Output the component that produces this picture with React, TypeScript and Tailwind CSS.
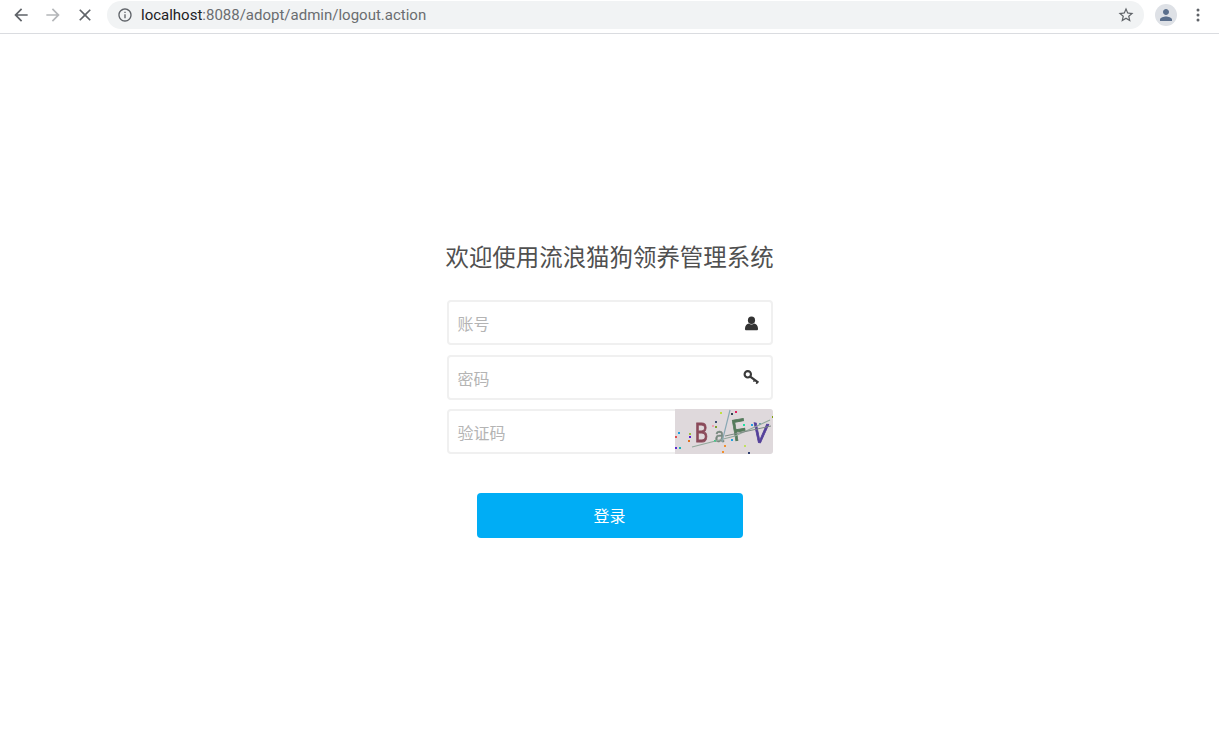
import React from "react";

const cjk = "font-['Roboto','Noto_Sans_CJK_SC',sans-serif]";

function Field({ label, children }: { label: string; children?: React.ReactNode }) {
  return (
    <div className="flex h-[45px] w-[326px] items-center justify-between rounded-[4px] border-2 border-[#f0f0f0] bg-white">
      <span className="pt-[4px] pl-[9px] text-[16px] text-[#b4b4b4]">{label}</span>
      {children}
    </div>
  );
}

function Captcha() {
  const dots: [number, number, string][] = [
    [45, 3, "#c0e040"], [60, 2, "#e02060"], [56, 4, "#304050"], [40, 12, "#405070"], [37, 16, "#f0a0b0"],
    [40, 17, "#80a030"], [14, 24, "#a0c040"], [14, 27, "#5a20d0"], [22, 22, "#e050c0"], [3, 23, "#20a0e0"],
    [13, 31, "#e07020"], [0, 27, "#e05050"], [0, 38, "#5a2bd0"], [4, 38, "#20b0b0"], [39, 31, "#10e080"],
    [56, 30, "#20a0e0"], [68, 15, "#20e0a0"], [76, 15, "#20a0e0"], [97, 7, "#80a010"], [49, 36, "#f09030"],
    [47, 42, "#f09030"], [73, 43, "#304070"], [69, 36, "#c0e060"], [84, 14, "#60a0b0"],
  ];
  return (
    <svg width="98" height="45" viewBox="0 0 98 45" className="-my-[2px] -mr-[2px] shrink-0 rounded-r-[3px]">
      <rect width="98" height="45" fill="#dfd9dc" />
      {dots.map(([x, y, c], i) => (
        <rect key={i} x={x} y={y} width="2" height="2" fill={c} />
      ))}
      <g style={{ filter: "blur(0.4px)" }}>
        <text x="20" y="33" fontFamily="Liberation Sans" fontSize="28" textLength="13" lengthAdjust="spacingAndGlyphs" fill="#8a4a5a" stroke="#8a4a5a" strokeWidth="0.9">B</text>
        <text x="40" y="33" fontFamily="Liberation Sans" fontSize="20" textLength="9" lengthAdjust="spacingAndGlyphs" fill="#78887e" stroke="#78887e" strokeWidth="0.6">a</text>
        <text x="57" y="31" fontFamily="Liberation Sans" fontSize="30" textLength="14" lengthAdjust="spacingAndGlyphs" fill="#557a5c" stroke="#557a5c" strokeWidth="0.9" transform="rotate(-10 64 20)">F</text>
        <text x="78" y="34" fontFamily="Liberation Sans" fontSize="28" textLength="15" lengthAdjust="spacingAndGlyphs" fill="#54409a" stroke="#54409a" strokeWidth="0.9" transform="rotate(6 86 24)">V</text>
        <path d="M17 38 L60 27 L95 11" stroke="#93a89c" strokeWidth="1.2" fill="none" />
        <path d="M50 27 L96 17" stroke="#7d8a84" strokeWidth="1" fill="none" />
        <path d="M47 33 L55 1" stroke="#88a8b4" strokeWidth="1.2" fill="none" />
      </g>
    </svg>
  );
}

export default function App() {
  return (
    <div className={`min-h-[739px] bg-white ${cjk}`}>
      <header className="flex h-[34px] items-start border-b border-[#dadce0] bg-white pt-px">
        <div className="flex h-[28px] w-[107px] items-center pl-[11px]">
          <svg width="20" height="20" viewBox="0 0 24 24" fill="#5f6368" className="mr-[12px]"><path d="M20 11H7.83l5.59-5.59L12 4l-8 8 8 8 1.41-1.41L7.83 13H20z" /></svg>
          <svg width="20" height="20" viewBox="0 0 24 24" fill="#b4b6b9" className="mr-[12px]"><path d="M12 4l-1.41 1.41L16.17 11H4v2h12.17l-5.58 5.59L12 20l8-8z" /></svg>
          <svg width="20" height="20" viewBox="0 0 24 24" fill="#5f6368"><path d="M19 6.41L17.59 5 12 10.59 6.41 5 5 6.41 10.59 12 5 17.59 6.41 19 12 13.41 17.59 19 19 17.59 13.41 12z" /></svg>
        </div>
        <div className="flex h-[28px] w-[1037px] items-center rounded-full bg-[#f1f3f4] pl-[10px] pr-[9px]">
          <svg width="16" height="16" viewBox="0 0 24 24" fill="#5f6368" className="mr-[8px]"><path d="M11 7h2v2h-2zm0 4h2v6h-2zm1-9C6.48 2 2 6.48 2 12s4.48 10 10 10 10-4.48 10-10S17.52 2 12 2zm0 18c-4.41 0-8-3.59-8-8s3.59-8 8-8 8 3.59 8 8-3.59 8-8 8z" /></svg>
          <span className="text-[15px] text-[#6a6d70]"><span className="text-[#202124]">localhost</span>:8088/adopt/admin/logout.action</span>
          <svg width="18" height="18" viewBox="0 0 24 24" fill="#5f6368" className="ml-auto"><path d="M22 9.24l-7.19-.62L12 2 9.19 8.63 2 9.24l5.46 4.73L5.82 21 12 17.27 18.18 21l-1.63-7.03L22 9.24zM12 15.4l-3.76 2.27 1-4.28-3.32-2.88 4.38-.38L12 6.1l1.71 4.04 4.38.38-3.32 2.88 1 4.28L12 15.4z" /></svg>
        </div>
        <div className="mt-[3px] ml-[11px] flex h-[22px] w-[22px] items-center justify-center rounded-full bg-[#dee1e6]">
          <svg width="18" height="18" viewBox="0 0 24 24" fill="#5b6f8c"><path d="M12 12c2.21 0 4-1.79 4-4s-1.79-4-4-4-4 1.79-4 4 1.79 4 4 4zm0 2c-2.67 0-8 1.34-8 4v2h16v-2c0-2.66-5.33-4-8-4z" /></svg>
        </div>
        <div className="mt-[4px] ml-[11px] flex h-[20px] w-[20px] items-center justify-center">
          <svg width="20" height="20" viewBox="0 0 24 24" fill="#5f6368"><circle cx="12" cy="6" r="1.8" /><circle cx="12" cy="12" r="1.8" /><circle cx="12" cy="18" r="1.8" /></svg>
        </div>
      </header>

      <main className="flex flex-col items-center pt-[208px]">
        <h1 className="mb-[26px] text-center text-[23.45px] leading-[32px] font-normal whitespace-nowrap text-[#505050]">欢迎使用流浪猫狗领养管理系统</h1>
        <div className="flex flex-col gap-[10px]">
          <Field label="账号">
            <svg width="15" height="15" viewBox="0 0 16 16" fill="#333333" className="mt-[2px] mr-[12px]">
              <ellipse cx="8" cy="4.6" rx="3.8" ry="4" />
              <path d="M1 13.8c0-3.4 2.1-5.4 4.2-5.7 1.5 1.2 4.1 1.2 5.6 0 2.1.3 4.2 2.3 4.2 5.7 0 1-.7 1.5-1.4 1.5H2.4c-.7 0-1.4-.5-1.4-1.5z" />
            </svg>
          </Field>
          <Field label="密码">
            <svg width="17" height="17" viewBox="0 0 16 16" fill="none" stroke="#3a3a3a" className="mr-[11px]">
              <circle cx="4.5" cy="5" r="3" strokeWidth="2" />
              <path d="M6.8 7.2 L14.5 12.8" strokeWidth="2.2" />
              <path d="M11 10 L10 12 M13.4 12 L12.6 14" strokeWidth="1.4" />
            </svg>
          </Field>
          <div className="-mt-px">
            <Field label="验证码">
              <Captcha />
            </Field>
          </div>
        </div>
        <button className="mt-[39px] flex h-[45px] w-[266px] items-center justify-center rounded-[4px] bg-[#00adf5] pt-[2px] text-[16px] text-white">登录</button>
      </main>
    </div>
  );
}
